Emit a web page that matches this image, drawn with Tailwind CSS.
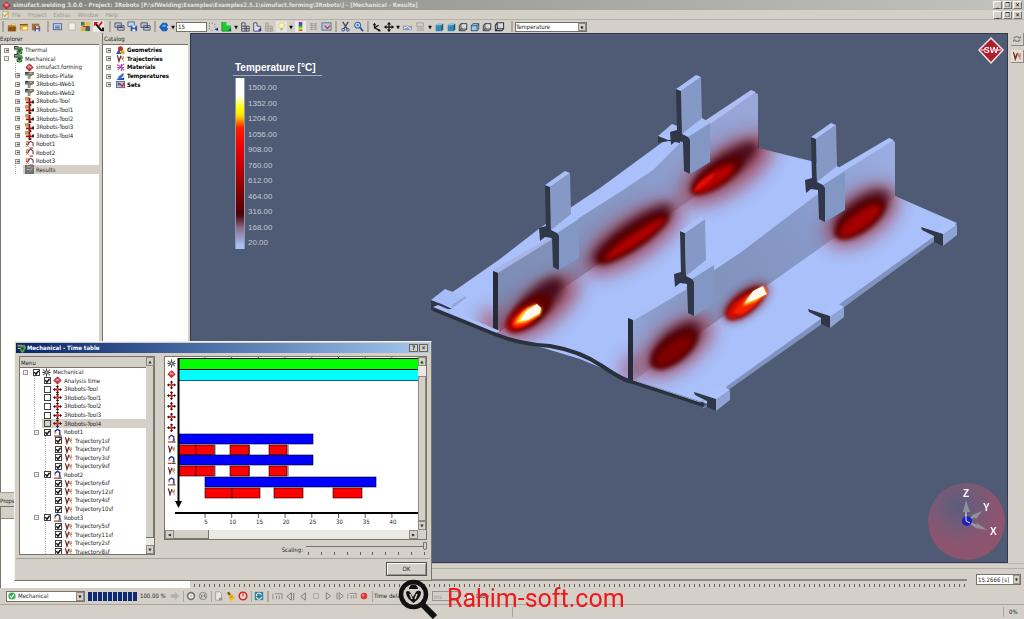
<!DOCTYPE html>
<html lang="en">
<head>
<meta charset="utf-8">
<title>simufact.welding 3.0.0</title>
<script src="https://cdn.jsdelivr.net/npm/@tailwindcss/browser@4"></script>
</head>
<body class="relative flex min-h-screen flex-col overflow-hidden bg-[#d4d0c8] font-['DejaVu_Sans_Condensed','DejaVu_Sans',sans-serif] text-[6px] leading-[8px] text-[#222]">

<svg class="absolute size-0" aria-hidden="true">
  <symbol id="cross" viewBox="0 0 10 10"><path d="M5 1v8M1 5h8" stroke="#8c1010" stroke-width="1.6"/><path d="M5 0l1.800 2.200H3.200zM5 10L3.200 7.800h3.600zM0 5l2.200-1.800v3.600zM10 5L7.800 3.200v3.600z" fill="#2a1414"/><rect x="3.800" y="3.800" width="2.400" height="2.400" fill="#e04040"/></symbol>
  <symbol id="tick" viewBox="0 0 10 10"><path d="M2 4.500l2.200 3L8 2.500" fill="none" stroke="#111" stroke-width="2"/></symbol>
  <symbol id="traj" viewBox="0 0 10 10"><path d="M1 1.500c1 0 1.300 2 2.300 6.500L5.500 2" fill="none" stroke="#6d2a20" stroke-width="1.400"/><path d="M5.500 2c1 0 1 5.500 3.300 6M6 4.500l3 .6M8 2v3" fill="none" stroke="#b98570" stroke-width="1.100"/></symbol>
  <symbol id="robot" viewBox="0 0 10 10"><path d="M2.500 5V3.200L5 1.500l2.500 1.500V7" fill="none" stroke="#26358c" stroke-width="1.500"/><path d="M1 9h4" stroke="#c23a2a" stroke-width="1.400"/><path d="M5 9h4.500" stroke="#444" stroke-width="1.400"/><circle cx="2.500" cy="5.500" r="1.200" fill="#e8a080"/><circle cx="7.500" cy="7" r="1.200" fill="#555"/></symbol>
  <symbol id="robotx" viewBox="0 0 10 10"><path d="M1 1h4v3H1z" fill="#d8b070"/><path d="M4 5V3l2.500-1.500L9 3.500V7" fill="none" stroke="#5a4a6c" stroke-width="1.300"/><path d="M1 4l3 3M1 7l3-3M5 9h4" stroke="#d83020" stroke-width="1.300"/></symbol>
  <symbol id="gear" viewBox="0 0 10 10"><path d="M5 .5v9M1 2l8 6M9 2L1 8M.5 5h9" stroke="#222" stroke-width="1"/><circle cx="5" cy="5" r="2.300" fill="#555"/><circle cx="5" cy="5" r="1" fill="#ddd"/></symbol>
  <symbol id="ball" viewBox="0 0 10 10"><path d="M5 .5L9.500 5 5 9.500.5 5z" fill="#b9222c"/><circle cx="5" cy="4.500" r="3" fill="#c8444c"/><path d="M3 4.500h4M4 3l2 2" stroke="#f3cccc" stroke-width=".9"/></symbol>
  <symbol id="proc" viewBox="0 0 10 10"><path d="M0 0h5v4H0z" fill="#2f5130"/><path d="M4 1h5v4H4z" fill="#73806b"/><path d="M3 4h6v5H3z" fill="#33402f"/><path d="M4 6l2 3 4-6" fill="none" stroke="#3cb64a" stroke-width="1.700"/><path d="M1 2h3M1 5h3" stroke="#d9e2d0"/></symbol>
  <symbol id="part" viewBox="0 0 10 10"><path d="M0 1h10v3L6 6v3H3V5H0z" fill="#77776b"/><path d="M2 2.500h6M4.500 5v4" stroke="#c5c5a5"/><path d="M0 1h4v2H0z" fill="#444"/></symbol>
  <symbol id="tool" viewBox="0 0 10 10"><path d="M0 0h5v4H0z" fill="#c89858"/><path d="M5 1v8M1 6h9" stroke="#a51414" stroke-width="2"/><path d="M4 8h3v2H4zM8 4h2v3H8z" fill="#222"/></symbol>
  <symbol id="res" viewBox="0 0 10 10"><rect width="10" height="10" fill="#6c7076"/><path d="M2 2h5M2 5h3" stroke="#c5c9ce"/><path d="M4 8l4-6 1 1-4 5z" fill="#c9a860"/></symbol>
  <symbol id="geo" viewBox="0 0 10 10"><circle cx="5" cy="3" r="2.800" fill="#c7332b"/><path d="M0 9l3-5 3 5z" fill="#2e50b4"/><circle cx="7.500" cy="7" r="2.300" fill="#e0a820"/></symbol>
  <symbol id="mat" viewBox="0 0 10 10"><path d="M1 2l4 2 4-3M2 8l3-4 4 4M1 5h8M6 1v8" fill="none" stroke="#b04ab8" stroke-width="1.300"/></symbol>
  <symbol id="temp" viewBox="0 0 10 10"><path d="M1 9l2-4 5-4 1 2-4 5z" fill="#3b74d0"/><path d="M0 9h9V6z" fill="#2747a0"/><path d="M6 1h3v2z" fill="#9fd0f0"/></symbol>
  <symbol id="sets" viewBox="0 0 10 10"><rect x=".5" y="1.500" width="9" height="7" fill="#b9c4dc" stroke="#56648c"/><path d="M4 4l3 3 2-4" fill="none" stroke="#c52c2c" stroke-width="1.500"/><path d="M2 3h2v3H2z" fill="#3c509c"/></symbol>
  <symbol id="folder" viewBox="0 0 12 12"><path d="M1 4h4l1-2h4v3h1v6H1z" fill="#b07a28"/><path d="M2 6h9l-1 5H1z" fill="#8a5516"/><path d="M6 2h4v2H6z" fill="#f2d890"/></symbol>
  <symbol id="folder2" viewBox="0 0 12 12"><path d="M1 3h4l1-1h5v8H1z" fill="#c89028"/><path d="M2 5h8v5H2z" fill="#e2b64c"/><path d="M5 6h5v3H5z" fill="#fff1c0"/><path d="M1 3h9" stroke="#6a430c"/></symbol>
  <symbol id="edit" viewBox="0 0 12 12"><path d="M1 1h8v10H1z" fill="#f2f0d8" stroke="#9a9a78"/><path d="M3 10l1-4 6-5 1 2-6 5z" fill="#d8b030"/><path d="M2 5l3 4" stroke="#4a8840"/></symbol>
  <symbol id="saveas" viewBox="0 0 12 12"><path d="M1 2h9v8H1z" fill="#a8742c"/><path d="M4 5h7v6H4z" fill="#5d5a92"/><path d="M6 5h3v2H6zM6 9h3v2H6z" fill="#fff"/></symbol>
  <symbol id="winb" viewBox="0 0 12 12"><rect x="1.500" y="3" width="9" height="6.500" fill="#dce6f4" stroke="#3f5f98"/><path d="M3 5.500h6M3 7.500h6" stroke="#3f5f98" stroke-width="1.200"/></symbol>
  <symbol id="paper" viewBox="0 0 12 12"><path d="M2 2h7v8H2z" fill="#f4f0e8" stroke="#b8b4a8"/></symbol>
  <symbol id="procs" viewBox="0 0 12 12"><path d="M1 1h4v4H1z" fill="#587840"/><path d="M6 1h5v4H6z" fill="#e2c040"/><path d="M1 6h5v5H1z" fill="#d8b050"/><path d="M6 6h5v5H6z" fill="#3d6a48"/><path d="M3 6h7" stroke="#c02020"/></symbol>
  <symbol id="redx" viewBox="0 0 12 12"><rect width="12" height="12" fill="#eceae6"/><path d="M2 2l7 8h2V7" fill="none" stroke="#111" stroke-width="2.200"/><path d="M10 1L6 6" stroke="#d01818" stroke-width="2"/><path d="M1 1h5L1 6z" fill="#d01818"/></symbol>
  <symbol id="printer" viewBox="0 0 12 12"><path d="M1 2h7v5H1zM4 5h7v5H4z" fill="#b9c3d2" stroke="#4a5870"/><path d="M5 7h5" stroke="#334"/></symbol>
  <symbol id="disk" viewBox="0 0 12 12"><path d="M1 1h7v5H1z" fill="#c5d2e6" stroke="#4c6690"/><path d="M4 5h7v6H4z" fill="#3456a4"/><path d="M6 5h3v2H6zM6 9h3v2H6z" fill="#fff"/></symbol>
  <symbol id="blue" viewBox="0 0 12 12"><path d="M0 6l4-5h5l2 3-2 2 2 2-2 3H4z" fill="#1d62b4"/><path d="M3 5l3-2 3 1-3 2z" fill="#5fb0ee"/></symbol>
  <symbol id="dots" viewBox="0 0 12 12"><path d="M1 2h1v1H1zM4 2h1v1H4zM7 3h1v1H7zM1 5h1v1H1zM1 8h1v1H1zM4 10h1v1H4zM7 6h1v1H7z" fill="#50607c"/><path d="M7 9l4 2V7z" fill="#2030c0"/></symbol>
  <symbol id="green" viewBox="0 0 12 12"><path d="M1 1h5v4h5v6H1z" fill="#22c832"/><path d="M1 1v10h10" fill="none" stroke="#158825"/><path d="M8 10l3 1V8z" fill="#2030c0"/></symbol>
  <symbol id="mesh" viewBox="0 0 12 12"><path d="M2 1h4v4h5v6H2zM2 5h4v6M2 8h9M8 5v6" fill="none" stroke="#3d4250"/></symbol>
  <symbol id="shape" viewBox="0 0 12 12"><path d="M2 1h4v4h4v6H2z" fill="#dcdcec" stroke="#3d4250"/><path d="M7 10l4 1V7z" fill="#2030c0"/></symbol>
  <symbol id="meshg" viewBox="0 0 12 12"><path d="M2 1h3v4h5v6H2zM2 5h3v6M2 8h8M8 5v6" fill="none" stroke="#9a968c"/></symbol>
  <symbol id="bulb" viewBox="0 0 12 12"><rect width="12" height="12" fill="#e6e3dc"/><circle cx="6" cy="5" r="3" fill="#fdf6a8" stroke="#c8bc70" stroke-width=".7"/><path d="M5 8h2v2H5z" fill="#a09878"/></symbol>
  <linearGradient id="rain" x2="0" y2="1"><stop stop-color="#d02090"/><stop offset=".25" stop-color="#4040d0"/><stop offset=".5" stop-color="#20c040"/><stop offset=".75" stop-color="#e8e020"/><stop offset="1" stop-color="#e02020"/></linearGradient>
  <symbol id="rainb" viewBox="0 0 12 12"><rect width="12" height="12" fill="#eceae6"/><rect x="4" y="1" width="4" height="10" fill="url(#rain)"/></symbol>
  <symbol id="lines" viewBox="0 0 12 12"><path d="M2 3h8M2 5h8M2 7h8M2 9h8M4 2v8M8 2v8" stroke="#9c988e" stroke-width=".8"/></symbol>
  <symbol id="pic" viewBox="0 0 12 12"><rect x="1" y="2" width="10" height="8" fill="#b8c6da" stroke="#5c6e94"/><path d="M4 5l3 3 3-3" fill="none" stroke="#c83030" stroke-width="1.400"/></symbol>
  <symbol id="scis" viewBox="0 0 12 12"><path d="M3 1l5 8M9 1L4 9" stroke="#3c4454" stroke-width="1.400"/><circle cx="3.500" cy="9.500" r="1.500" fill="none" stroke="#2a4fa0"/><circle cx="8.500" cy="9.500" r="1.500" fill="none" stroke="#2a4fa0"/></symbol>
  <symbol id="lens" viewBox="0 0 12 12"><circle cx="5" cy="4.500" r="3.200" fill="#d8ecff" stroke="#3565a8" stroke-width="1.200"/><path d="M3.500 4.500h3M5 3v3" stroke="#3565a8"/><path d="M7.500 7l3.500 4" stroke="#33518a" stroke-width="1.800"/></symbol>
  <symbol id="axes" viewBox="0 0 12 12"><path d="M3 2v5l6 3M3 7l5-3" fill="none" stroke="#111" stroke-width="1.500"/><path d="M1 4l2-3 2 3zM8 8l3 3H7z" fill="#111"/></symbol>
  <symbol id="move" viewBox="0 0 12 12"><path d="M6 1v10M1 6h10" stroke="#111" stroke-width="1.500"/><path d="M6 0l2.500 3h-5zM6 12L3.500 9h5zM0 6l3-2.500v5zM12 6L9 3.500v5z" fill="#111"/></symbol>
  <symbol id="cubef" viewBox="0 0 12 12"><path d="M2 4l2-2h7v7l-2 2H2z" fill="#3c86b8"/><path d="M2 4l2-2h7L9 4z" fill="#8cc4e8"/><path d="M9 4l2-2v7l-2 2z" fill="#205878"/></symbol>
  <symbol id="cube" viewBox="0 0 12 12"><path d="M1.500 4.500l2-2.500h7v6.500l-2 2h-7zM3.500 2v6.500h7M3.500 8.500l-2 2" fill="#d8dde6" stroke="#2d3340" stroke-width="1.100"/></symbol>
  <symbol id="cubeb" viewBox="0 0 12 12"><path d="M1.500 4.500l2-2.500h7v6.500l-2 2h-7z" fill="#9cc8e4" stroke="#2d5068" stroke-width="1.100"/><path d="M8.500 4.500v6M1.500 4.500h7l2-2.500" fill="none" stroke="#2d5068"/></symbol>
  <symbol id="cam" viewBox="0 0 12 12"><path d="M1 5h10v5H1z" fill="#8a9cc0"/><path d="M2 8l4-2 4 3" stroke="#fff" fill="none"/><path d="M7 2h3v3H7z" fill="#e6d880"/></symbol>
  <symbol id="camg" viewBox="0 0 12 12"><path d="M2 2h7v4H2zM2 8h8M2 10h8" fill="none" stroke="#a09c92"/></symbol>
  <symbol id="arrowg" viewBox="0 0 12 12"><path d="M1 4h5V1l5 5-5 5V8H1z" fill="#b4b0a6"/></symbol>
  <symbol id="stopc" viewBox="0 0 12 12"><circle cx="6" cy="6" r="5" fill="#77756f"/><circle cx="6" cy="6" r="3" fill="#f0eee8"/><circle cx="6" cy="6" r="1.200" fill="#b8b4aa"/></symbol>
  <symbol id="pausec" viewBox="0 0 12 12"><circle cx="6" cy="6" r="4.500" fill="#d0ccc4" stroke="#8a877f"/><path d="M3 4l2 2-2 3M9 3L7 6l3 2" stroke="#77746c" fill="none" stroke-width="1.200"/></symbol>
  <symbol id="link" viewBox="0 0 12 12"><path d="M1 5q5-5 9 0M11 7q-5 5-9 0" stroke="#85827a" stroke-width="2" fill="none"/><path d="M8 5h4V1zM4 7H0v4z" fill="#85827a"/></symbol>
  <symbol id="doc" viewBox="0 0 12 12"><path d="M2 1h5l2 2v8H2z" fill="#ebe8e2" stroke="#99958b"/><path d="M6 8h4v3H6z" fill="#99958b"/></symbol>
  <symbol id="broom" viewBox="0 0 12 12"><path d="M1 2l3-1 2 4-2 1z" fill="#8a5020"/><path d="M3 6l4-2 4 4-4 4-3-2z" fill="#f0c020"/><path d="M5 8l3-2" stroke="#a07010"/></symbol>
  <symbol id="power" viewBox="0 0 12 12"><circle cx="6" cy="6" r="4.500" fill="#f4e0de" stroke="#cc2828" stroke-width="2"/><path d="M6 3v3.500" stroke="#cc2828" stroke-width="1.500"/></symbol>
  <symbol id="refresh" viewBox="0 0 12 12"><rect x="1" y="1" width="10" height="10" fill="#3480a0"/><path d="M3 6a3 3 0 016-1M9 7a3 3 0 01-6 0" fill="none" stroke="#fff" stroke-width="1.200"/></symbol>
  <symbol id="p0" viewBox="0 0 12 12"><path d="M1 3v6M3 3h8M5 5v4M8 5v4M11 3v6" stroke="#8a877f" fill="none"/></symbol>
  <symbol id="p1" viewBox="0 0 12 12"><path d="M7 2v8L2 6zM9.500 2v8" fill="none" stroke="#77746c"/></symbol>
  <symbol id="p2" viewBox="0 0 12 12"><path d="M8 2v8L3 6z" fill="none" stroke="#77746c"/></symbol>
  <symbol id="p3" viewBox="0 0 12 12"><path d="M3 3h6v6H3z" fill="none" stroke="#a8a49a"/></symbol>
  <symbol id="p4" viewBox="0 0 12 12"><path d="M4 2v8l5-4z" fill="none" stroke="#77746c"/></symbol>
  <symbol id="p5" viewBox="0 0 12 12"><path d="M2.500 2v8M5 2v8l5-4z" fill="none" stroke="#77746c"/></symbol>
  <symbol id="rec" viewBox="0 0 12 12"><circle cx="6" cy="6" r="4" fill="#dc3838"/><circle cx="5" cy="5" r="1.500" fill="#f08080"/></symbol>
</svg>

<!-- Title bar -->
<header class="flex h-[10px] items-center gap-[2px] bg-linear-to-r from-[#83837f] to-[#c2c3bf] px-[2px]">
  <svg class="size-[9px]"><use href="#ball"/></svg>
  <h1 class="flex-1 whitespace-nowrap font-['DejaVu_Sans_Condensed','DejaVu_Sans',sans-serif] text-[6px] font-bold text-[#e4e1da]">simufact.welding 3.0.0 - Project: 3Robots [F:\sfWelding\Examples\Examples2.5.1\simufact.forming\3Robots\] - [Mechanical - Results]</h1>
  <div class="winbtns flex gap-px"></div>
</header>

<!-- Menu bar -->
<nav class="flex h-[10px] items-center gap-[7px] border-b border-[#b5b1a8] px-[2px] text-[#99958c]">
  <svg class="size-[8px]"><use href="#edit"/></svg>
  <a href="#" class="-ml-[5px]">File</a><a href="#">Project</a><a href="#">Extras</a><a href="#">Window</a><a href="#">Help</a>
  <div class="winbtns ml-auto flex gap-px"></div>
</nav>

<!-- Toolbar -->
<div id="toolbar" class="flex h-[13px] items-center"></div>

<main class="flex flex-1">
  <!-- Side panels -->
  <aside class="flex w-[190px] flex-col">
    <div class="flex flex-1">
      <section class="flex w-[99px] flex-col">
        <h2 class="h-[11px] pt-[2px]">Explorer</h2>
        <div class="flex-1 border-t border-l border-[#77746c] bg-white"><ul id="explorer" class="flex h-[129px] flex-col pt-px"></ul></div>
      </section>
      <section class="ml-[3px] flex flex-1 flex-col border-l border-[#77746c]">
        <h2 class="h-[11px] pt-[2px] pl-px">Catalog</h2>
        <div class="mr-[2px] flex-1 border-t border-[#77746c] bg-white"><ul id="catalog" class="flex h-[44px] flex-col pt-px font-bold text-black"></ul></div>
      </section>
    </div>
    <section class="h-[96px] border-t border-[#a39f96]">
      <h2 class="h-[13px] pt-[4px]">Properties</h2>
      <div class="h-[82px] border-t border-l border-[#77746c] bg-white"><div class="h-[12px] border-b border-[#8d8a82] bg-[#d4d0c8]"></div></div>
    </section>
  </aside>

  <div class="flex flex-1 flex-col">
    <div class="flex flex-1">
    <!-- 3D view -->
    <section class="relative flex-1 border border-[#33394a] bg-[#4f5b74]" aria-label="3D view">
      <svg class="absolute inset-0 h-full w-full" viewBox="191 34 816 528" preserveAspectRatio="xMidYMid meet">
        <defs>
          <filter id="b1" x="-50%" y="-50%" width="200%" height="200%"><feGaussianBlur stdDeviation="1"/></filter>
          <filter id="b3" x="-50%" y="-50%" width="200%" height="200%"><feGaussianBlur stdDeviation="2.500"/></filter>
          <filter id="b5" x="-60%" y="-60%" width="220%" height="220%"><feGaussianBlur stdDeviation="5"/></filter>
          <filter id="b8" x="-60%" y="-90%" width="220%" height="280%"><feGaussianBlur stdDeviation="9"/></filter>
          <linearGradient id="w1" gradientUnits="userSpaceOnUse" x1="495" y1="300" x2="758" y2="120"><stop stop-color="#7c8bb2"/><stop offset=".6" stop-color="#8b9bc9"/><stop offset="1" stop-color="#98a6d8"/></linearGradient>
          <linearGradient id="w2" gradientUnits="userSpaceOnUse" x1="630" y1="350" x2="895" y2="165"><stop stop-color="#93a5d6"/><stop offset=".35" stop-color="#8292bd"/><stop offset=".65" stop-color="#8799c8"/><stop offset="1" stop-color="#9bade0"/></linearGradient>
          <radialGradient id="orb" cx=".4" cy=".3"><stop stop-color="#5a5d7c"/><stop offset=".6" stop-color="#785a76"/><stop offset="1" stop-color="#8d5470"/></radialGradient>
          <clipPath id="body"><path d="M433 306L457 290 500 259 540 228 600 188 664 141 690 130 751 90 759 94V148L811 162 830 170 889 138 895 141V196L957 223 938 237 708 404 633 381 580 359 497 334z"/></clipPath>
          <g id="bracket">
            <path d="M545 185L550 187 551 231 546 228z" fill="#2f3748"/>
            <path d="M550 187L570 173 571 215 551 231z" fill="#8598c6"/>
            <path d="M545 185L565 171 570 173 550 187z" fill="#a9bff6"/>
            <path d="M551 230L571 214 579 219 557 234z" fill="#a9bff8"/>
            <path d="M557 233L579 219V258L559 270z" fill="#8397c4"/>
            <path d="M539 228L546 226 551 230 557 233 559 236V270L553 267 552 238 545 237 540 241z" fill="#2f3748"/>
          </g>
          <g id="clamp"><path d="M716 400L708 396 722 386 730 390z" fill="#abc2fc"/><path d="M716 400L730 390V400L716 411z" fill="#8fa3d4"/><path d="M694 392L716 399V411L707 407V401L695 395z" fill="#2f3748"/></g>
        </defs>
        <!-- base plate -->
        <path d="M433 304L457 289 500 259 540 228 600 188 664 141 690 128 758 148 811 161 895 196 957 223 938 237 843 306 724 392 708 404 633 381 580 359 497 334z" fill="#a9c0fa"/>
        <path d="M727 386L822 318 841 303 936 235V240L843 308 822 324 724 393z" fill="#8093bf"/>
        <path d="M658 136L672 124 680 127 680 134 667 142z" fill="#a9bff6"/><path d="M658 136L668 140 680 139V143L669 141 658 143z" fill="#2f3748"/>
        <!-- first web -->
        <path d="M493 271L551 237 557 232 620 192 653 170 666 157 681 142 700 126 751 91 758 94V149L690 200 593 268 498 333z" fill="url(#w1)"/>
        <path d="M493 271L551 236 551 240 498 273z" fill="#a9b4e6"/>
        <path d="M700 124L751 90 756 92 703 129z" fill="#b0bcf2"/>
        <g clip-path="url(#body)">
          <g filter="url(#b8)" fill="#a02c34" opacity=".72">
            <ellipse cx="540" cy="308" rx="48" ry="20" transform="rotate(-38 540 308)"/>
            <ellipse cx="633" cy="238" rx="57" ry="22" transform="rotate(-34 633 238)"/>
            <ellipse cx="727" cy="170" rx="54" ry="23" transform="rotate(-34 727 170)"/>
            <ellipse cx="490" cy="324" rx="8" ry="16"/>
          </g>
          <g filter="url(#b5)" fill="#3a060a" opacity=".85">
            <ellipse cx="540" cy="300" rx="30" ry="13" transform="rotate(-44 540 300)"/>
            <ellipse cx="632" cy="234" rx="48" ry="12" transform="rotate(-35 632 234)"/>
            <ellipse cx="726" cy="166" rx="38" ry="12" transform="rotate(-35 726 166)"/>
          </g>
          <g filter="url(#b3)" fill="#5a0204">
            <ellipse cx="529" cy="313" rx="27" ry="13" transform="rotate(-38 529 313)"/>
            <ellipse cx="633" cy="238" rx="43" ry="11" transform="rotate(-34 633 238)"/>
            <ellipse cx="717" cy="175" rx="31" ry="11" transform="rotate(-34 717 175)"/>
          </g>
          <g filter="url(#b3)" fill="#b50000">
            <ellipse cx="524" cy="317" rx="20" ry="9" transform="rotate(-35 524 317)"/>
            <ellipse cx="635" cy="239" rx="36" ry="5" transform="rotate(-34 635 239)"/>
            <ellipse cx="714" cy="179" rx="24" ry="7" transform="rotate(-34 714 179)"/>
          </g>
          <path d="M694 192Q696 182 716 172 710 184 694 192z" fill="#e81000" filter="url(#b1)"/>
          <ellipse cx="526" cy="317" rx="16" ry="7" transform="rotate(-35 526 317)" fill="#ff2400" filter="url(#b1)"/>
          <path d="M515 324Q520 310 536 304L542 309 540 315 526 322z" fill="#ffd820" filter="url(#b1)"/>
          <path d="M520 321L526 311 537 304 541 308 540 313 528 320z" fill="#fff8ec"/>
        </g>
        <path d="M493 271L498 273V334L493 332z" fill="#252b39"/>
        <use href="#bracket"/><use href="#bracket" x="131" y="-96"/>
        <!-- second web -->
        <path d="M628 319L687 287 693 280 712 268 740 250 817 192 840 169 890 139 895 142V197L827 243 690 340 633 381z" fill="url(#w2)"/>
        <path d="M628 319L685 287 687 289 633 321z" fill="#a9c0f6"/>
        <path d="M693 279L740 248 817 190 819 193 740 253 695 283z" fill="#a9c0fa"/>
        <path d="M838 168L889 138 894 140 841 173z" fill="#a9c0f8"/>
        <g clip-path="url(#body)">
          <g filter="url(#b8)" fill="#a02c34" opacity=".72">
            <ellipse cx="677" cy="346" rx="43" ry="21" transform="rotate(-38 677 346)"/>
            <ellipse cx="862" cy="216" rx="42" ry="23" transform="rotate(-36 862 216)"/>
            <ellipse cx="630" cy="370" rx="7" ry="15"/>
          </g>
          <ellipse cx="746" cy="302" rx="27" ry="12" transform="rotate(-38 746 302)" fill="#8c1c24" opacity=".8" filter="url(#b5)"/>
          <g filter="url(#b5)" fill="#3a060a" opacity=".8">
            <ellipse cx="676" cy="344" rx="30" ry="14" transform="rotate(-42 676 344)"/>
            <ellipse cx="862" cy="212" rx="32" ry="14" transform="rotate(-36 862 212)"/>
          </g>
          <g filter="url(#b3)" fill="#5a0204">
            <ellipse cx="674" cy="349" rx="28" ry="13" transform="rotate(-38 674 349)"/>
            <ellipse cx="860" cy="219" rx="30" ry="13" transform="rotate(-36 860 219)"/>
            <ellipse cx="745" cy="303" rx="23" ry="10" transform="rotate(-38 745 303)"/>
          </g>
          <g filter="url(#b3)">
            <ellipse cx="674" cy="351" rx="22" ry="8" transform="rotate(-38 674 351)" fill="#7e0000"/>
            <ellipse cx="860" cy="221" rx="25" ry="8" transform="rotate(-36 860 221)" fill="#a40000"/>
            <ellipse cx="742" cy="306" rx="18" ry="8" transform="rotate(-38 742 306)" fill="#e00800"/>
          </g>
          <path d="M733 313Q742 296 765 286L768 293 755 306 742 315z" fill="#f42000" filter="url(#b1)"/>
          <path d="M743 306Q748 293 763 286L767 293 756 301z" fill="#ffd020" filter="url(#b1)"/>
          <path d="M745 303L753 291 763 286 765 291 767 294 754 300z" fill="#fffaf0"/>
        </g>
        <path d="M628 318L633 320V381L628 379z" fill="#252b39"/>
        <use href="#bracket" x="266" y="-48"/><use href="#bracket" x="135" y="46"/>
        <!-- front edge and clamps -->
        <path d="M433 309Q475 326 497 335T550 346Q580 351 602 366T633 382L704 405" fill="none" stroke="#2b303d" stroke-width="4"/>
        <path d="M633 380L700 402 708 399 708 405 703 408" fill="none" stroke="#90a3d2" stroke-width="1"/>
        <path d="M431 300V310H437L452 309 440 303z" fill="#2f3748"/>
        <path d="M433 307L438 305 500 331 497 333z" fill="#adbffa"/>
        <path d="M431 300L445 289 466 297 452 308z" fill="#a6bcf6"/>
        <path d="M452 308V305L466 296V298z" fill="#8fa3d4"/>
        <use href="#clamp"/><use href="#clamp" x="114" y="-83"/><use href="#clamp" x="227" y="-165"/>
        <!-- product badge -->
        <path d="M991 38L1003 50 991 63 979 50z" fill="#b01e2c" stroke="#f1e4e6" stroke-width="1.500"/>
        <text x="991" y="53" text-anchor="middle" font-family="Liberation Sans" font-weight="bold" font-size="9" fill="#fff">SW</text><path d="M981 50h4M997 50h4" stroke="#fff"/>
        <!-- orientation axes -->
        <circle cx="966.500" cy="521.500" r="38.500" fill="url(#orb)"/>
        <g stroke="#a0a0a8" stroke-width="2"><path d="M966 521V508M966 521L976 515M966 521L978 527"/></g>
        <path d="M966 500L970 512H963zM982 511L976 519 972 515zM987 530L975 528 977 523z" fill="#8f9199"/>
        <circle cx="967" cy="521" r="5" fill="#1c20c0"/><path d="M966 515v6l4 2" stroke="#dde" fill="none"/>
        <g font-family="Liberation Sans" font-weight="bold" font-size="10" fill="#fff"><text x="963" y="497">Z</text><text x="983" y="511">Y</text><text x="990" y="535">X</text></g>
      </svg>
      <div class="relative ml-[42px] w-[89px] pt-[28px] font-['Liberation_Sans',sans-serif]">
        <h2 class="border-b border-[#a3abbd] pb-px pl-[2px] text-[10px] leading-[12px] font-bold whitespace-nowrap text-white">Temperature [°C]</h2>
        <div class="flex gap-[3px] pt-[2px] pl-[2px]">
          <div class="h-[171px] w-[10px] border-x border-[#8e97ac] bg-[linear-gradient(to_bottom,#fff_0%,#fff_10%,#ffff00_18%,#ffe000_22%,#ff2000_29%,#f00000_40%,#8a0000_65%,#4a0206_80%,#8a6f8f_88%,#a9bdf8_98%)]"></div>
          <ol id="scale" class="flex h-[170px] flex-col justify-between pt-[5px] text-[8px] leading-[10px] text-[#c3c9d6]"></ol>
        </div>
      </div>
    </section>
    <aside class="flex w-[16px] flex-col items-end gap-[4px]">
      <button class="size-[13px] border-r border-b border-[#8d8a82] p-[2px]" aria-label="Link"><svg class="size-full"><use href="#link"/></svg></button>
      <button class="size-[13px] border-r border-b border-[#8d8a82] bg-[#e8dcd4] p-px" aria-label="Trajectory"><svg class="size-full"><use href="#traj"/></svg></button>
    </aside>
    </div>
    <!-- Time slider -->
    <div class="flex h-[25px] items-end border-t border-[#bdb9b0]">
      <div class="flex h-[20px] flex-1 items-end border-t border-[#b3afa6] pb-px">
        <div class="flex flex-1 flex-col pl-[4px]">
          <div class="mr-[9px] h-[3px] border-t-2 border-[#8d8a82]"></div>
          <div class="mt-[2px] mr-[9px] h-[3px] bg-[repeating-linear-gradient(to_right,#66635c_0_1px,transparent_1px_5px)]"></div>
        </div>
        <label class="mr-[3px] mb-[2px] flex h-[11px] w-[45px] border border-[#77746c] bg-white">
          <select aria-label="Time" class="w-full min-w-0 flex-1 appearance-none pl-px text-[6px] leading-[8px]"><option>15.2666 [s]</option></select>
          <span class="w-[7px] border border-[#99958c] bg-[#d4d0c8] text-center text-[4px] leading-[7px]">▼</span>
        </label>
      </div>
    </div>
  </div>
</main>

<!-- Process toolbar -->
<div id="bottombar" class="flex h-[16px] items-center pl-[2px]"></div>

<!-- Status bar -->
<footer class="flex h-[15px] border-t border-[#a8a49b] pt-[2px]">
  <div class="flex-1"></div>
  <div class="mb-px h-[10px] w-[492px] border-x border-[#a8a49b]"></div>
  <output class="w-[20px] pt-px pl-[5px]">0%</output>
</footer>

<!-- Time table window -->
<section role="dialog" aria-label="Mechanical - Time table" class="absolute top-[341px] left-[14px] flex w-[418px] flex-col border border-[#77746c] border-t-[#f4f2ee] border-l-[#f4f2ee] bg-[#d4d0c8] p-px">
  <header class="flex h-[10px] items-center gap-px bg-linear-to-r from-[#0a246a] to-[#a6caf0] pr-[2px] pl-px">
    <svg class="size-[9px]"><use href="#proc"/></svg>
    <h2 class="flex-1 font-bold text-white">Mechanical - Time table</h2>
    <button class="h-[8px] w-[9px] border border-[#66635c] bg-[#d4d0c8] text-center leading-[6px] font-bold">?</button>
    <button class="h-[8px] w-[9px] border border-[#66635c] bg-[#d4d0c8] text-center leading-[6px] font-bold">✕</button>
  </header>
  <div class="flex gap-[9px] px-[3px] pt-[3px]">
    <div class="flex h-[199px] w-[136px] overflow-hidden border border-[#77746c] bg-white">
      <div class="flex-1">
        <h3 class="h-[11px] border-b border-[#77746c] bg-[#d4d0c8] pt-[2px] pl-px">Menu</h3>
        <ul id="menu" class="flex h-[188px] flex-col"></ul>
      </div>
      <div class="flex w-[8px] flex-col bg-[#ebe9e4]">
        <button class="h-[9px] border border-[#8d8a82] bg-[#d4d0c8] text-[4px] leading-[6px]" aria-label="Up">▲</button>
        <div class="h-[172px] border-r border-b border-[#77746c] bg-[#d4d0c8]"></div>
        <button class="mt-auto h-[9px] border border-[#8d8a82] bg-[#d4d0c8] text-[4px] leading-[6px]" aria-label="Down">▼</button>
      </div>
    </div>
    <div class="flex flex-1 flex-col">
      <div class="grid h-[184px] grid-cols-[1fr_8px] grid-rows-[1fr_9px] border border-[#77746c] bg-white">
        <svg id="chart" class="h-[173px] w-full" viewBox="165 357 254 173" preserveAspectRatio="xMinYMin slice"></svg>
        <div class="flex flex-col bg-[#ebe9e4]">
          <button class="h-[9px] border border-[#8d8a82] bg-[#d4d0c8] text-[4px] leading-[6px]" aria-label="Up">▲</button>
          <div class="mt-[10px] flex-1 border border-[#8d8a82] bg-[#d4d0c8]"></div>
          <button class="h-[9px] border border-[#8d8a82] bg-[#d4d0c8] text-[4px] leading-[6px]" aria-label="Down">▼</button>
        </div>
        <div class="flex bg-[#ebe9e4]">
          <button class="w-[9px] border border-[#8d8a82] bg-[#d4d0c8] text-[4px] leading-[6px]" aria-label="Left">◀</button>
          <div class="w-[35px] border-r border-b border-[#77746c] bg-[#d4d0c8]"></div>
          <button class="ml-auto w-[9px] border border-[#8d8a82] bg-[#d4d0c8] text-[4px] leading-[6px]" aria-label="Right">▶</button>
        </div>
        <div class="bg-[#d4d0c8]"></div>
      </div>
      <div class="flex h-[16px] items-center justify-end gap-[3px] pt-[4px]">
        <label for="scaling">Scaling:</label>
        <div class="relative w-[121px]">
          <div class="border-t border-[#77746c]"></div>
          <div class="mt-[5px] flex justify-between px-[2px]" id="ticks"></div>
          <input id="scaling" type="range" value="100" class="absolute inset-0 w-full opacity-0">
          <span class="absolute -top-[4px] right-0 h-[8px] w-[4px] rounded-b border border-[#77746c] bg-[#d4d0c8]"></span>
        </div>
      </div>
    </div>
  </div>
  <div class="mt-[2px] flex h-[21px] justify-end border-t border-[#a8a49b] pt-[3px] pr-[3px]">
    <button class="h-[14px] w-[41px] border border-[#55524c] bg-[#d4d0c8] text-center shadow-[inset_1px_1px_#fff,inset_-1px_-1px_#99958c]">OK</button>
  </div>
</section>

<!-- Site mark -->
<a href="#" class="absolute top-[579px] left-[398px] flex items-center gap-[9px]">
  <svg class="h-[40px] w-[40px]" viewBox="0 0 40 40"><path d="M24 25L37 38" stroke="#111" stroke-width="6"/><circle cx="15.500" cy="15.500" r="12.500" fill="#d4d0c8" stroke="#111" stroke-width="4.500"/><path d="M11 10a4.500 4.500 0 019 0zM8 13a3 3 0 014 0l3 5 3-5a3 3 0 015 0q0 6-7.500 11Q8 19 8 13z" fill="#111"/><path d="M12 15l2 5M19 15l-2 5" stroke="#d4d0c8" stroke-width="1.500"/></svg>
  <span class="font-['Roboto',sans-serif] text-[25px] leading-[38px] text-[#f01818]">Rahim-soft.com</span>
</a>

<script>
const icon = (id, cls) => `<svg class="${cls || 'size-[9px] shrink-0'}"><use href="#${id}"/></svg>`;

document.querySelectorAll('.winbtns').forEach(e => {
  e.innerHTML = [['Minimise', '_'], ['Restore', '❐'], ['Close', '✕']].map(([n, g]) =>
    `<button aria-label="${n}" class="h-[8px] w-[9px] border border-[#77746c] border-t-white border-l-white bg-[#d4d0c8] text-center text-[6px] leading-[6px] font-bold text-black">${g}</button>`).join('');
});

// Tree rows: [level, expander, icon, label, checked, selected]
function tree(id, rows, checks) {
  document.getElementById(id).innerHTML = rows.map(([lv, ex, ic, label, on, sel]) => `
    <li class="flex min-h-0 flex-1 items-center whitespace-nowrap">
      ${'<span class="w-[11px] shrink-0"></span>'.repeat(lv)}
      <span class="flex w-[11px] shrink-0 items-center justify-center">${ex
        ? `<span class="size-[5px] border border-[#99958c] text-center text-[5px] leading-[3px] font-normal text-black">${ex}</span>`
        : '<span class="h-[9px] w-[5px] border-l border-dotted border-[#b5b1a8]"></span>'}</span>
      <label class="flex h-full flex-1 items-center ${sel ? 'bg-[#d4d0c8]' : ''}">
      ${checks ? `<span class="relative ml-[2px] size-[7px] shrink-0"><input type="checkbox" ${on ? 'checked' : ''} class="peer block size-[7px] appearance-none border border-[#44423d]">${icon('tick', 'absolute inset-0 hidden size-[7px] peer-checked:block')}</span>` : ''}
      <span class="flex w-[13px] shrink-0 justify-center">${icon(ic)}</span><span>${label}</span></label>
    </li>`).join('');
}
const tools = ['', '1', '2', '3', '4'];
tree('explorer', [
  [0, '+', 'proc', 'Thermal'], [0, '-', 'proc', 'Mechanical'], [1, '', 'ball', 'simufact.forming'],
  ...['Plate', 'Web1', 'Web2'].map(n => [1, '+', 'part', '3Robots-' + n]),
  ...tools.map(n => [1, '+', 'tool', '3Robots-Tool' + n]),
  ...[1, 2, 3].map(n => [1, '+', 'robotx', 'Robot' + n]), [1, '', 'res', 'Results', 0, 1]]);
tree('catalog', [[0, '+', 'geo', 'Geometries'], [0, '+', 'traj', 'Trajectories'], [0, '+', 'mat', 'Materials'], [0, '+', 'temp', 'Temperatures'], [0, '+', 'sets', 'Sets']]);
tree('menu', [
  [0, '-', 'gear', 'Mechanical', 1], [1, '', 'ball', 'Analysis time', 1],
  ...tools.map(n => [1, '', 'cross', '3Robots-Tool' + n, 0, n === '4']),
  ...[[1, 7, 3, 9], [6, 12, 4, 10], [5, 11, 2, 8]].flatMap((t, i) => [
    [1, '-', 'robot', 'Robot' + (i + 1), 1], ...t.map(k => [2, '', 'traj', `Trajectory${k}sf`, 1])])], true);

document.getElementById('scale').innerHTML = [1500, 1352, 1204, 1056, 908, 760, 612, 464, 316, 168, 20].map(v => `<li>${v}.00</li>`).join('');
document.getElementById('ticks').innerHTML = '<i class="h-[3px] w-px bg-[#66635c]"></i>'.repeat(10);

// Toolbars
const btn = id => `<button aria-label="${id}" class="flex h-[12px] w-[13px] shrink-0 items-center justify-center">${icon(id, 'size-[11px]')}</button>`;
const sm = id => `<button aria-label="${id}" class="flex h-[12px] w-[12px] shrink-0 items-center justify-center">${icon(id, 'size-[10px]')}</button>`;
const grip = '<span class="mr-[2px] ml-[2px] h-[11px] w-[2px] shrink-0 border-x border-[#aaa69c]"></span>';
const sep = '<span class="mr-px ml-[2px] h-[11px] w-px shrink-0 bg-[#aaa69c]"></span>';
const caret = '<span class="w-[6px] shrink-0 text-center text-[5px] text-black">▼</span>';
const drop = '<span class="w-[8px] shrink-0 border border-[#8d8a82] bg-[#d4d0c8] text-center text-[4px] leading-[7px] text-black">▼</span>';
document.getElementById('toolbar').innerHTML =
  grip + ['folder', 'folder2', 'saveas'].map(sm).join('') + '<span class="w-[3px]"></span>' + grip + btn('winb') + '<span class="w-[2px]"></span>' + ['paper', 'procs', 'redx'].map(btn).join('') + '<span class="w-[2px]"></span>' + grip
  + ['printer', 'disk', 'printer'].map(btn).join('') + grip + sm('blue') + caret
  + '<input aria-label="Value" value="15" class="h-[10px] w-[31px] shrink-0 border border-[#77746c] bg-white pl-px text-[6px]">'
  + btn('dots') + btn('green') + caret + ['mesh', 'shape', 'meshg'].map(sm).join('') + btn('bulb') + caret + ['rainb', 'lines', 'pic'].map(btn).join('')
  + grip + ['scis', 'lens'].map(btn).join('') + grip + ['axes', 'move'].map(sm).join('') + caret + ['cam', 'camg'].map(btn).join('') + caret
  + ['cubef', 'cubef', 'cube', 'cubeb', 'cube'].map(sm).join('') + btn('cube') + '<span class="w-[3px]"></span>' + grip
  + `<label class="flex h-[10px] w-[72px] border border-[#77746c] bg-white"><select aria-label="Result" class="min-w-0 flex-1 appearance-none text-[6px] leading-[8px]"><option>Temperature</option></select>${drop}</label>`;
document.getElementById('bottombar').innerHTML =
  `<label class="ml-[4px] flex h-[11px] w-[79px] items-center border border-[#77746c] bg-white"><svg class="mx-px size-[8px]" viewBox="0 0 10 10"><circle cx="5" cy="5" r="4.500" fill="#3aa648"/><path d="M2.500 5l2 2 3-4" fill="none" stroke="#fff" stroke-width="1.500"/></svg><select aria-label="Process" class="min-w-0 flex-1 appearance-none pl-px text-[6px] leading-[8px]"><option>Mechanical</option></select>${drop}</label>`
  + `<div role="progressbar" aria-valuenow="100" class="ml-[3px] flex h-[9px] gap-px">${'<i class="w-[4px] bg-[#0f2a75]"></i>'.repeat(10)}</div>`
  + '<output class="mx-[3px] w-[26px] shrink-0 whitespace-nowrap">100.00 %</output>' + sm('arrowg') + sep + sm('stopc') + sm('pausec') + sep + ['doc', 'broom', 'power'].map(sm).join('') + sep + sm('refresh') + grip
  + ['p0', 'p1', 'p2'].map(btn).join('') + ['p3', 'p4', 'p5', 'p0', 'rec'].map(sm).join('') + sep
  + '<label for="delay" class="w-[58px] whitespace-nowrap">Time delay</label><input id="delay" value="ms" disabled class="h-[10px] w-[27px] border border-[#99958c] pl-px text-[6px] text-[#99958c]"><label class="ml-[7px] flex items-center gap-[3px]"><input type="checkbox" class="size-[7px] appearance-none border border-[#77746c] bg-white">Loop</label>';

// Gantt chart
const bar = (x, y, x2, c) => `<rect x="${x}" y="${y}" width="${x2 - x}" height="10" fill="${c}" stroke="#000" stroke-width=".6"/>`;
let g = '<rect x="178" y="358" width="241" height="1" fill="#000"/><rect x="178" y="359" width="241" height="11" fill="#0f0"/><rect x="178" y="369" width="241" height="1" fill="#000"/><rect x="178" y="370" width="241" height="11" fill="#0ff"/><rect x="178" y="380" width="241" height="1" fill="#068"/>';
for (const y of [434, 455]) {
  g += bar(179, y, 313, '#00f');
  for (const [a, b] of [[179, 196], [196, 215], [230, 249], [269, 287]]) g += bar(a, y + 11, b, '#f00');
  g += `<path d="M214.500 ${y + 11}v10M249.500 ${y + 11}v10M288 ${y + 11}v10" stroke="#555"/>`;
}
g += bar(205, 477, 376, '#00f');
for (const [a, b] of [[205, 232], [232, 260], [274, 303], [333, 362]]) g += bar(a, 488, b, '#f00');
g += '<path d="M178.500 358V504" stroke="#000" stroke-width="2"/><path d="M175 501h7l-3.500 7z"/><path d="M175 513H419" stroke="#000" stroke-width="2"/>';
for (let i = 0; i < 9; i++) {
  const x = 205 + i * 26.7;
  g += `<path d="M${x} 514v4M${x} 356v2" stroke="#333" stroke-width=".8"/>`;
  if (i < 8) g += `<text x="${x + 1}" y="524" font-size="6" text-anchor="middle" fill="#222">${(i + 1) * 5}</text>`;
}
['gear', 'ball', 'cross', 'cross', 'cross', 'cross', 'cross', 'robot', 'traj', 'robot', 'traj', 'robot', 'traj'].forEach((n, i) => {
  g += `<use href="#${n}" x="167" y="${359 + i * 10.7}" width="9" height="9"/>`;
});
document.getElementById('chart').innerHTML = g;
</script>
</body>
</html>
